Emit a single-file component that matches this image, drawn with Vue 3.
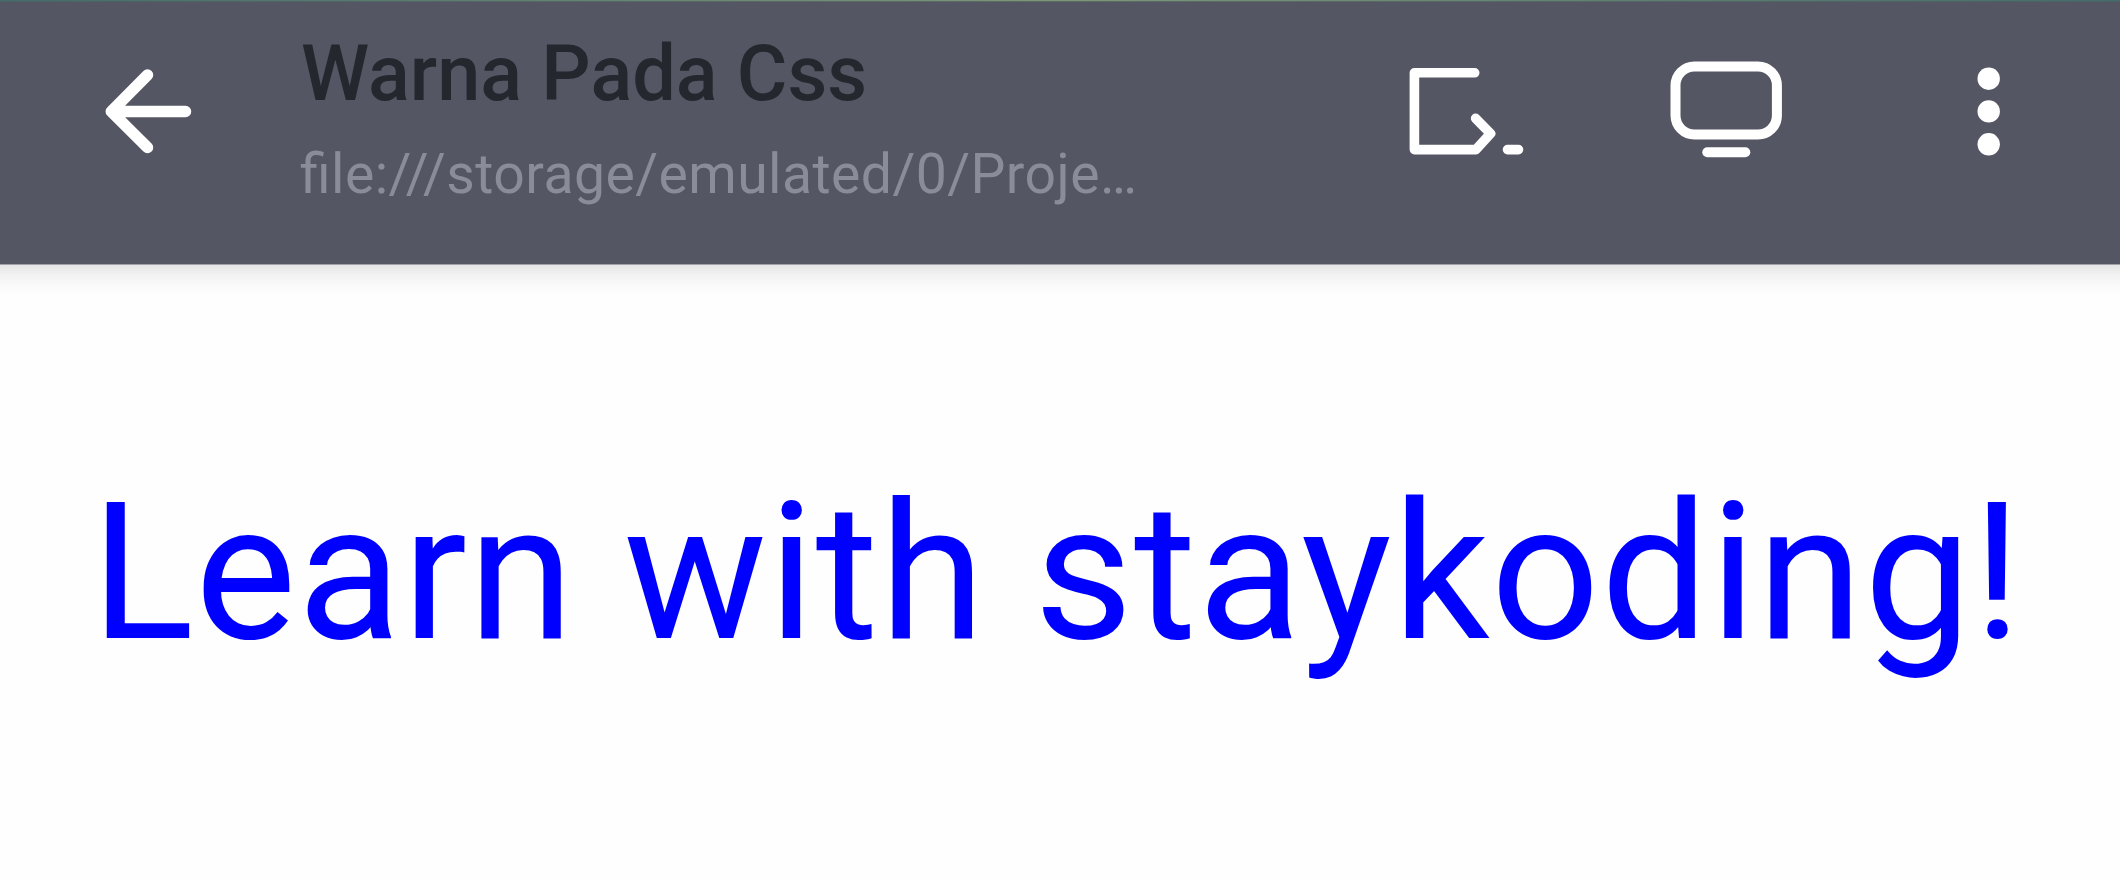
<template>
  <div class="screen">
    <header class="toolbar">
      <button class="icon-btn back" aria-label="Back">
        <svg width="120" height="120" viewBox="0 0 120 120">
          <path d="M57.5 25 21.3 61.5 57.5 97.5M21.3 61.5H95.5" stroke-width="11.5" />
        </svg>
      </button>

      <div class="heading">
        <div class="title">{{ title }}</div>
        <div class="url">{{ url }}</div>
      </div>

      <nav class="actions">
        <button class="icon-btn" aria-label="Console">
          <svg width="150" height="120" viewBox="0 0 150 120">
            <path d="M84.7 22.8H24.4V99.6H86L100.6 83.6 85.6 68.4M117.5 99.6H128.5" stroke-width="9.6" />
          </svg>
        </button>
        <button class="icon-btn" aria-label="Desktop view">
          <svg width="150" height="120" viewBox="0 0 150 120">
            <rect x="25.5" y="16.4" width="101.4" height="68.2" rx="19" stroke-width="10" />
            <path d="M57.3 102.2H95.3" stroke-width="10" />
          </svg>
        </button>
        <button class="icon-btn" aria-label="More">
          <svg width="80" height="120" viewBox="0 0 80 120">
            <g class="dots">
              <circle v-for="y in dots" :key="y" cx="38.7" :cy="y" r="11.2" />
            </g>
          </svg>
        </button>
      </nav>
    </header>

    <main class="page">
      <p class="message">{{ message }}</p>
    </main>
  </div>
</template>

<script setup>
const title = 'Warna Pada Css'
const url = 'file:///storage/emulated/0/Proje…'
const message = 'Learn with staykoding!'

// vertical centres of the overflow menu dots
const dots = [28.7, 61.4, 94.3]
</script>

<style>
body {
  margin: 0;
  background: #fefefe;
}
</style>

<style scoped>
.screen {
  height: 880px;
  overflow: hidden;
  background: #fefefe;
  font-family: Roboto, sans-serif;
}
.toolbar {
  box-sizing: border-box;
  display: flex;
  align-items: flex-start;
  height: 265px;
  padding-left: 90px;
  background:
    linear-gradient(90deg, #466b6b, #7f9578 50%, #466b6b) top / 100% 1px no-repeat,
    linear-gradient(90deg, #4a6265, #5c6c65 50%, #4a6265) 0 1px / 100% 1px no-repeat,
    #545763;
  border-bottom: 1px solid #a0a1a9;
}
.icon-btn {
  flex: none;
  padding: 0;
  margin-top: 50px;
  border: 0;
  background: none;
}
.icon-btn svg {
  display: block;
  fill: none;
  stroke: #fff;
  stroke-linecap: round;
  stroke-linejoin: round;
}
.icon-btn .dots {
  fill: #fff;
  stroke: none;
}
.heading {
  width: 1090px;
  padding-left: 90px;
  white-space: nowrap;
}
.title {
  margin-top: 28px;
  padding-left: 1px;
  font-size: 77.5px;
  font-weight: 500;
  line-height: 92px;
  color: #25272e;
}
.url {
  margin-top: 22px;
  font-size: 55.3px;
  line-height: 66px;
  letter-spacing: 0.45px;
  font-feature-settings: 'liga' 1;
  color: #8a8c99;
}
.actions {
  display: flex;
  gap: 110px;
}
.actions .icon-btn:last-child {
  margin-left: 40px;
}
.page {
  height: 615px;
  background: linear-gradient(#e4e4e4, #f2f2f2 10px, #fafafa 20px, #fefefe 32px);
}
.message {
  margin: 0;
  padding: 196px 0 0 91px;
  font-size: 191px;
  line-height: 224px;
  letter-spacing: 1.15px;
  white-space: nowrap;
  color: #00f;
}
</style>
